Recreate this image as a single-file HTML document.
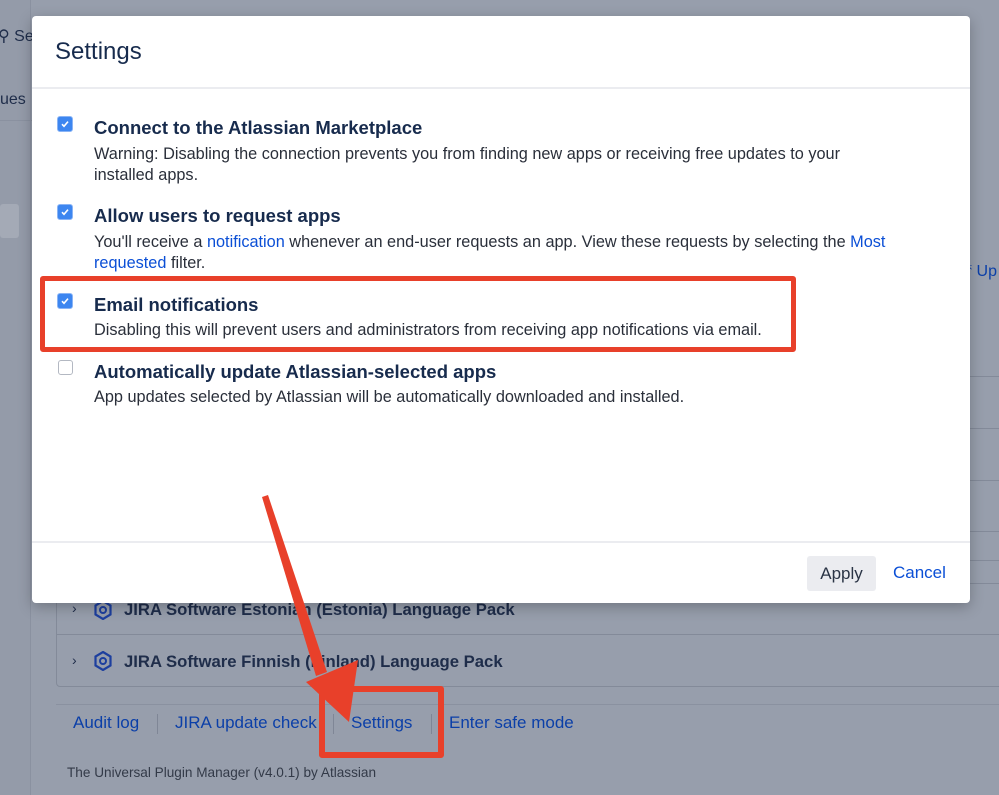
<!DOCTYPE html>
<html><head><meta charset="utf-8"><style>
*{margin:0;padding:0;box-sizing:border-box}
body{width:999px;height:795px;overflow:hidden;background:#979eac;font-family:"Liberation Sans",Arial,sans-serif;position:relative;color:#172b4d}
.abs{position:absolute}
.bgt{color:#1f2d4a}
.lnk{color:#0b3fa8}
.modal{left:32px;top:16px;width:938px;height:587px;background:#fff;border-radius:4px;box-shadow:0 4px 14px rgba(0,0,0,.25)}
.cb{width:16px;height:16px;border-radius:3px;background:#3d86f0;border:1px solid #8ab4f5}
.cb svg{display:block}
.t{font-size:18.5px;font-weight:bold;color:#172b4d}
.d{font-size:16.3px;color:#2a2f3a;line-height:21px}
.a{color:#0b4fd6}
</style></head><body>
<div class="abs" style="left:0;top:0;width:31px;height:795px;background:#949ba9"></div>
<div class="abs" style="left:30px;top:0;width:1px;height:795px;background:#8a91a0"></div>
<div class="abs bgt" style="left:-2px;top:26px;font-size:16px">⚲ Se</div>
<div class="abs bgt" style="left:0;top:91px;font-size:16px">ues</div>
<div class="abs" style="left:0;top:120px;width:32px;height:1px;background:#8a91a0"></div>
<div class="abs" style="left:0;top:204px;width:19px;height:34px;background:#a4aab6;border-radius:3px"></div>
<div class="abs lnk" style="left:965px;top:263px;font-size:16px">⤒ Up</div>
<div class="abs" style="left:970px;top:376px;width:29px;height:1px;background:#838a99"></div>
<div class="abs" style="left:970px;top:428px;width:29px;height:1px;background:#838a99"></div>
<div class="abs" style="left:970px;top:480px;width:29px;height:1px;background:#838a99"></div>
<div class="abs" style="left:970px;top:531px;width:29px;height:1px;background:#838a99"></div>
<div class="abs" style="left:56px;top:560px;width:960px;height:127px;border:1px solid #838a99;border-radius:4px"></div>
<div class="abs" style="left:56px;top:634px;width:960px;height:1px;background:#838a99"></div>
<div class="abs" style="left:56px;top:583px;width:960px;height:1px;background:#838a99"></div>
<div class="abs bgt" style="left:72px;top:600px;font-size:14px">›</div>
<div class="abs bgt" style="left:72px;top:652px;font-size:14px">›</div>
<svg class="abs" style="left:94px;top:600px" width="18" height="20" viewBox="0 0 18 20"><path d="M9 1L16.5 5.5V14.5L9 19L1.5 14.5V5.5Z" fill="none" stroke="#1d3f9e" stroke-width="2.2"/><circle cx="9" cy="10" r="3" fill="none" stroke="#1d3f9e" stroke-width="2"/></svg>
<svg class="abs" style="left:94px;top:651px" width="18" height="20" viewBox="0 0 18 20"><path d="M9 1L16.5 5.5V14.5L9 19L1.5 14.5V5.5Z" fill="none" stroke="#1d3f9e" stroke-width="2.2"/><circle cx="9" cy="10" r="3" fill="none" stroke="#1d3f9e" stroke-width="2"/></svg>
<div class="abs bgt" style="left:124px;top:600px;font-size:16.7px;font-weight:bold">JIRA Software Estonian (Estonia) Language Pack</div>
<div class="abs bgt" style="left:124px;top:652px;font-size:16.7px;font-weight:bold">JIRA Software Finnish (Finland) Language Pack</div>
<div class="abs" style="left:56px;top:704px;width:960px;height:1px;background:#8a91a0"></div>
<div class="abs lnk" style="left:73px;top:713px;font-size:17px">Audit log</div>
<div class="abs" style="left:157px;top:714px;width:1px;height:20px;background:#7f8696"></div>
<div class="abs lnk" style="left:175px;top:713px;font-size:17px">JIRA update check</div>
<div class="abs" style="left:333px;top:714px;width:1px;height:20px;background:#7f8696"></div>
<div class="abs lnk" style="left:351px;top:713px;font-size:17px">Settings</div>
<div class="abs" style="left:431px;top:714px;width:1px;height:20px;background:#7f8696"></div>
<div class="abs lnk" style="left:449px;top:713px;font-size:17px">Enter safe mode</div>
<div class="abs" style="left:67px;top:765px;font-size:13.6px;color:#333a48">The Universal Plugin Manager (v4.0.1) by Atlassian</div>

<div class="abs modal">
  <div class="abs" style="left:23px;top:22px;font-size:24px;color:#172b4d">Settings</div>
  <div class="abs" style="left:0;top:71px;width:938px;height:2px;background:#ebecf0"></div>
  <div class="abs" style="left:0;top:525px;width:938px;height:2px;background:#ebecf0"></div>
  <div class="abs cb" style="left:25px;top:100px"><svg width="14" height="14" viewBox="0 0 14 14"><path d="M4 7.2L6 9.3L10 4.6" fill="none" stroke="#fff" stroke-width="1.6"/></svg></div>
  <div class="abs t" style="left:62px;top:101px">Connect to the Atlassian Marketplace</div>
  <div class="abs d" style="left:62px;top:128px;width:785px">Warning: Disabling the connection prevents you from finding new apps or receiving free updates to your installed apps.</div>
  <div class="abs cb" style="left:25px;top:188px"><svg width="14" height="14" viewBox="0 0 14 14"><path d="M4 7.2L6 9.3L10 4.6" fill="none" stroke="#fff" stroke-width="1.6"/></svg></div>
  <div class="abs t" style="left:62px;top:189px">Allow users to request apps</div>
  <div class="abs d" style="left:62px;top:216px;width:810px">You'll receive a <span class="a">notification</span> whenever an end-user requests an app. View these requests by selecting the <span class="a">Most requested</span> filter.</div>
  <div class="abs cb" style="left:25px;top:277px"><svg width="14" height="14" viewBox="0 0 14 14"><path d="M4 7.2L6 9.3L10 4.6" fill="none" stroke="#fff" stroke-width="1.6"/></svg></div>
  <div class="abs t" style="left:62px;top:278px">Email notifications</div>
  <div class="abs d" style="left:62px;top:304px;white-space:nowrap">Disabling this will prevent users and administrators from receiving app notifications via email.</div>
  <div class="abs" style="left:26px;top:344px;width:15px;height:15px;border:1px solid #b3b8c2;border-radius:3px;background:#fff"></div>
  <div class="abs t" style="left:62px;top:345px">Automatically update Atlassian-selected apps</div>
  <div class="abs d" style="left:62px;top:371px;white-space:nowrap">App updates selected by Atlassian will be automatically downloaded and installed.</div>
  <div class="abs" style="left:775px;top:540px;width:69px;height:35px;background:#ebecf0;border-radius:3px;font-size:17px;color:#2a3445;text-align:center;line-height:35px">Apply</div>
  <div class="abs" style="left:861px;top:547px;font-size:17px;color:#0b4fd6">Cancel</div>
</div>

<div class="abs" style="left:40px;top:276px;width:756px;height:76px;border:5px solid #e8402a;border-radius:3px"></div>
<div class="abs" style="left:319px;top:686px;width:125px;height:72px;border:6px solid #e8402a;border-radius:3px"></div>
<svg class="abs" style="left:0;top:0" width="999" height="795"><path d="M262 497L268 495L327 672L316 676Z" fill="#e8402a"/><path d="M306 682L358 660L349 722Z" fill="#e8402a"/></svg>
</body></html>
